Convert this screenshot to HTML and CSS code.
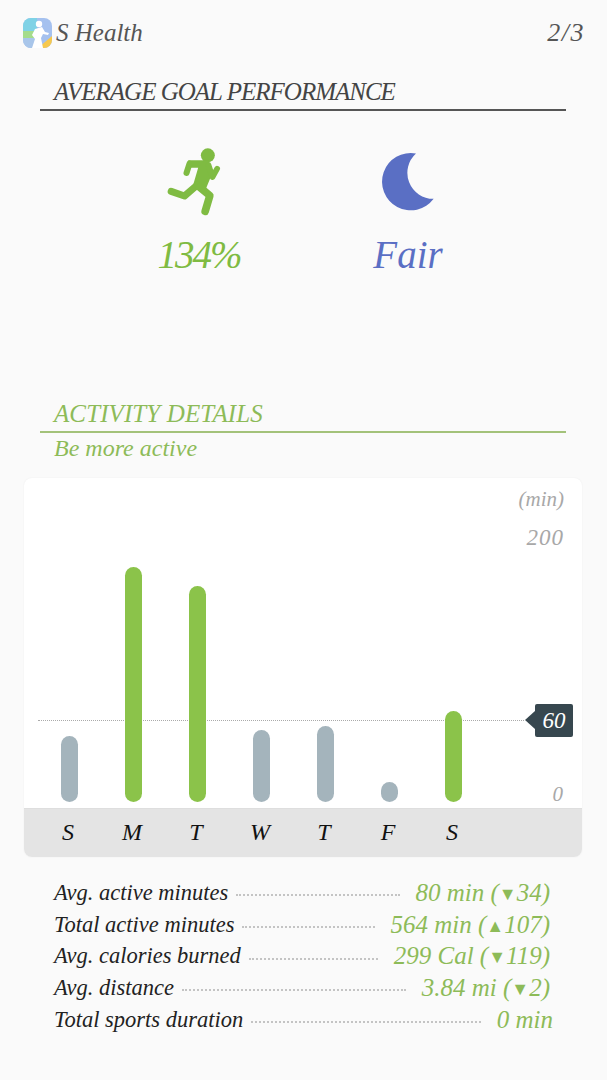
FILE: index.html
```html
<!DOCTYPE html>
<html>
<head>
    <title>S Health</title>
    <link rel="stylesheet" href="styles.css">
</head>
<body>
<div class="page">
    <!-- Top bar -->
    <div class="topBar">
        <svg class="appIcon" viewBox="0 0 29 30">
            <defs>
                <clipPath id="iconClip"><rect width="29" height="30" rx="8"/></clipPath>
            </defs>
            <g clip-path="url(#iconClip)">
                <rect width="29" height="30" fill="#a5c1ef"/>
                <rect width="14" height="13" fill="#7fd2e6"/>
                <rect y="13" width="14" height="7" fill="#a5dc8c"/>
                <rect y="20" width="14" height="10" fill="#a9c6ea"/>
                <path d="M15 30 L29 18 V30 Z" fill="#f6c84e"/>
                <circle cx="16" cy="6" r="3.2" fill="#fff"/>
                <path d="M12 11 L19 9 L22 14 L26 15 L25 17 L20 16 L18 20 L20 30 H9 L12 21 L9 17 Z" fill="#fff"/>
            </g>
        </svg>
        <span class="appName">S Health</span>
        <span class="pageNum">2/3</span>
    </div>

    <!-- Goal performance -->
    <div class="sectionHead">AVERAGE GOAL PERFORMANCE</div>
    <div class="goals">
        <div class="goal goalActive">
            <svg class="runner" viewBox="80 50 170 210">
                <circle cx="205" cy="75" r="21" fill="#7fbb42"/>
                <path d="M146 90 H206 L220 125 L198 178 L158 174 L176 112 H150 Z" fill="#7fbb42"/>
                <g fill="none" stroke="#7fbb42" stroke-linecap="round" stroke-linejoin="round">
                    <path d="M150 100 L141 128" stroke-width="18"/>
                    <path d="M207 104 L219 140 L233 115" stroke-width="17"/>
                    <path d="M172 165 L135 197 L95 183" stroke-width="21"/>
                    <path d="M180 170 L211 196 L197 243" stroke-width="23"/>
                </g>
            </svg>
            <div class="goalValue valueActive">134%</div>
        </div>
        <div class="goal goalSleep">
            <svg class="moon" viewBox="725 60 165 185">
                <path d="M830 67 A86 86 0 1 0 883 203 A78 78 0 0 1 830 67 Z" fill="#5a6fc4"/>
            </svg>
            <div class="goalValue">Fair</div>
        </div>
    </div>

    <!-- Activity details -->
    <div class="sectionHead green">ACTIVITY DETAILS</div>
    <div class="subHead">Be more active</div>

    <div class="chartCard">
        <div class="chartArea">
            <span class="unit">(min)</span>
            <span class="tick tick200">200</span>
            <span class="tick tick0">0</span>
            <div class="goalLine"></div>
            <div class="goalBadge">60</div>
            <div class="bars">
                <div class="barCol"><div class="bar grey" style="height: 66px"></div></div>
                <div class="barCol"><div class="bar lime" style="height: 235px"></div></div>
                <div class="barCol"><div class="bar lime" style="height: 216px"></div></div>
                <div class="barCol"><div class="bar grey" style="height: 72px"></div></div>
                <div class="barCol"><div class="bar grey" style="height: 76px"></div></div>
                <div class="barCol"><div class="bar grey" style="height: 20px"></div></div>
                <div class="barCol"><div class="bar lime" style="height: 91px"></div></div>
            </div>
        </div>
        <div class="days">
            <span>S</span><span>M</span><span>T</span><span>W</span><span>T</span><span>F</span><span>S</span>
        </div>
    </div>

    <!-- Summary list -->
    <div class="stats">
        <div class="statRow"><span>Avg. active minutes</span><i class="leader"></i><b>80 min (<span class="arrow">▼</span>34)</b></div>
        <div class="statRow"><span>Total active minutes</span><i class="leader"></i><b>564 min (<span class="arrow">▲</span>107)</b></div>
        <div class="statRow"><span>Avg. calories burned</span><i class="leader"></i><b>299 Cal (<span class="arrow">▼</span>119)</b></div>
        <div class="statRow"><span>Avg. distance</span><i class="leader"></i><b>3.84 mi (<span class="arrow">▼</span>2)</b></div>
        <div class="statRow lastRow"><span>Total sports duration</span><i class="leader"></i><b>0 min</b></div>
    </div>
</div>
</body>
</html>
```

FILE: styles.css
```css
body {
    margin: 0;
    background-color: #fafafa;
    font-family: "Liberation Serif", serif;
    font-style: italic;
    color: #444;
}

.page {
    width: 607px;
    height: 1080px;
    overflow: hidden;
}

/* Top bar */
.topBar {
    display: flex;
    align-items: center;
    height: 30px;
    padding: 18px 22px 0 23px;
}

.appIcon {
    width: 29px;
    height: 30px;
}

.appName {
    margin-left: 4px;
    font-size: 25px;
    color: #555;
}

.pageNum {
    margin-left: auto;
    font-size: 26px;
    letter-spacing: 1.5px;
    color: #555;
}

/* Section headings */
.sectionHead {
    margin: 0 41px 0 40px;
    padding-left: 14px;
    height: 35px;
    line-height: 36px;
    font-size: 25px;
    letter-spacing: -1px;
    border-bottom: 2px solid #555;
    white-space: nowrap;
}

.topBar + .sectionHead {
    margin-top: 26px;
}

.sectionHead.green {
    margin-top: 0;
    color: #8dbb58;
    border-bottom-color: #a3c27a;
    letter-spacing: 0.1px;
}

.subHead {
    margin: 1px 0 0 54px;
    height: 44px;
    line-height: 28px;
    font-size: 24px;
    color: #8dbb58;
}

/* Goal icons */
.goals {
    display: flex;
    height: 285px;
    padding-top: 36px;
    box-sizing: border-box;
}

.goal {
    display: flex;
    flex-direction: column;
    align-items: center;
}

.goalActive {
    width: 118px;
    margin-left: 140px;
    color: #7fbb42;
}

.goalSleep {
    width: 100px;
    margin-left: 100px;
    color: #5a6fc4;
}

.runner {
    width: 57px;
    height: 70px;
    margin-right: 10px;
}

.moon {
    width: 55px;
    height: 62px;
    margin-top: 4px;
}

.goalValue {
    font-size: 39px;
    line-height: 44px;
    margin-top: 20px;
}

.valueActive {
    margin-top: 16px;
    letter-spacing: -2px;
}

/* Chart card */
.chartCard {
    width: 558px;
    margin-left: 24px;
    background-color: #fff;
    border-radius: 8px;
    overflow: hidden;
    box-shadow: 0 0 2px rgba(0, 0, 0, 0.06);
}

.chartArea {
    position: relative;
    height: 330px;
}

.unit,
.tick {
    position: absolute;
    right: 18px;
    color: #a8a8a8;
    font-size: 21px;
    line-height: 24px;
}

.unit { top: 9px; }
.tick200 { top: 48px; font-size: 23px; letter-spacing: 1px; }
.tick0 { top: 304px; right: 19px; }

.goalLine {
    position: absolute;
    left: 14px;
    right: 58px;
    top: 242px;
    border-top: 1px dotted #aaa;
}

.goalBadge {
    position: absolute;
    left: 511px;
    top: 226px;
    width: 38px;
    height: 33px;
    background-color: #37474f;
    border-radius: 2px;
    color: #fff;
    font-size: 23px;
    line-height: 33px;
    text-align: center;
}

.goalBadge:before {
    content: "";
    position: absolute;
    left: -10px;
    top: 7px;
    border-style: solid;
    border-width: 9px 10px 9px 0;
    border-color: transparent #37474f transparent transparent;
}

.bars {
    position: absolute;
    left: 13px;
    bottom: 6px;
    display: flex;
    align-items: flex-end;
}

.barCol {
    display: flex;
    justify-content: center;
    width: 64px;
}

.bar {
    width: 17px;
    border-radius: 9px;
}

.bar.grey { background-color: #a4b4bc; }
.bar.lime { background-color: #8bc34a; }

.days {
    display: flex;
    height: 49px;
    padding-left: 12px;
    background-color: #e4e4e4;
    border-top: 1px solid #dedede;
    box-sizing: border-box;
    color: #111;
    font-size: 24px;
    line-height: 46px;
}

.days span {
    width: 64px;
    text-align: center;
}

/* Summary list */
.stats {
    margin: 20px 57px 0 54px;
}

.statRow {
    display: flex;
    align-items: center;
    height: 31.7px;
    font-size: 22.5px;
    color: #222;
    white-space: nowrap;
}

.statRow b {
    font-weight: normal;
    color: #8dbb58;
    font-size: 25px;
}

.arrow {
    font-size: 18px;
    font-style: normal;
    vertical-align: 1px;
}

.leader {
    flex: 1;
    margin: 5px 16px 0 8px;
    border-top: 2px dotted #c4c4c4;
}

.lastRow {
    margin-right: -3px;
}
```
